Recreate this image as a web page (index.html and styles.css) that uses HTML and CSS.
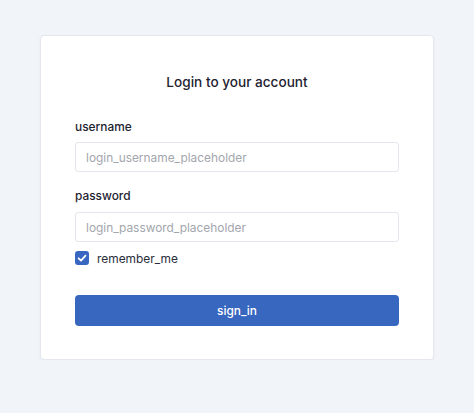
FILE: index.html
```html
<!DOCTYPE html>
<html lang="en">
<head>
<meta charset="utf-8">
<title>Login</title>
<link rel="stylesheet" href="styles.css">
</head>
<body>
<main class="page">
  <form class="card">
    <h1 class="title">Login to your account</h1>
    <label class="label" for="u">username</label>
    <input class="input" id="u" type="text" placeholder="login_username_placeholder">
    <label class="label label-pw" for="p">password</label>
    <input class="input" id="p" type="password" placeholder="login_password_placeholder">
    <label class="check-row">
      <span class="checkbox">
        <svg viewBox="0 0 14 14" width="14" height="14"><path d="M3.6 7.3 L6 9.6 L10.5 4.7" fill="none" stroke="#fff" stroke-width="1.8" stroke-linecap="round" stroke-linejoin="round"/></svg>
      </span>
      <span class="check-text">remember_me</span>
    </label>
    <button class="btn" type="button">sign_in</button>
  </form>
</main>
</body>
</html>
```

FILE: styles.css
```css
html, body {
  margin: 0;
  padding: 0;
}
body {
  background: #f1f4f9;
  font-family: Inter, "Noto Sans", "Liberation Sans", sans-serif;
  color: #1f2330;
}
.page {
  padding: 35px 40px 0 40px;
}
.card {
  box-sizing: border-box;
  width: 394px;
  height: 325px;
  background: #fff;
  border: 1px solid #e4e7ee;
  border-radius: 4px;
  box-shadow: 0 1px 3px rgba(30, 40, 70, 0.05);
  padding: 36px 34px 33px 34px;
  display: flex;
  flex-direction: column;
}
.title {
  margin: 0;
  font-size: 13.6px;
  font-weight: 500;
  line-height: 20px;
  text-align: center;
  color: #1e2230;
}
.label {
  display: block;
  margin-top: 25px;
  margin-bottom: 5px;
  font-size: 11.9px;
  font-weight: 500;
  line-height: 20px;
  color: #1e2230;
}
.label-pw {
  margin-top: 14px;
  margin-bottom: 6px;
}
.input {
  box-sizing: border-box;
  width: 100%;
  height: 30px;
  border: 1px solid #e3e6ec;
  border-radius: 3px;
  padding: 0 10px;
  font-family: inherit;
  font-size: 11.9px;
  color: #1e2230;
  background: #fff;
  outline: none;
}
.input::placeholder {
  color: #a3a6ad;
}
.check-row {
  display: flex;
  align-items: center;
  gap: 8px;
  margin-top: 6px;
  height: 20px;
  font-size: 11.9px;
  color: #2a2e3a;
}
.checkbox {
  width: 14px;
  height: 14px;
  border-radius: 3px;
  background: #3866c0;
  display: flex;
  align-items: center;
  justify-content: center;
}
.checkbox svg {
  display: block;
}
.btn {
  margin-top: 27px;
  height: 31px;
  width: 100%;
  border: none;
  border-radius: 4px;
  background: #3867c0;
  color: #fff;
  font-family: inherit;
  font-size: 11.9px;
  font-weight: 500;
  cursor: pointer;
}
```
